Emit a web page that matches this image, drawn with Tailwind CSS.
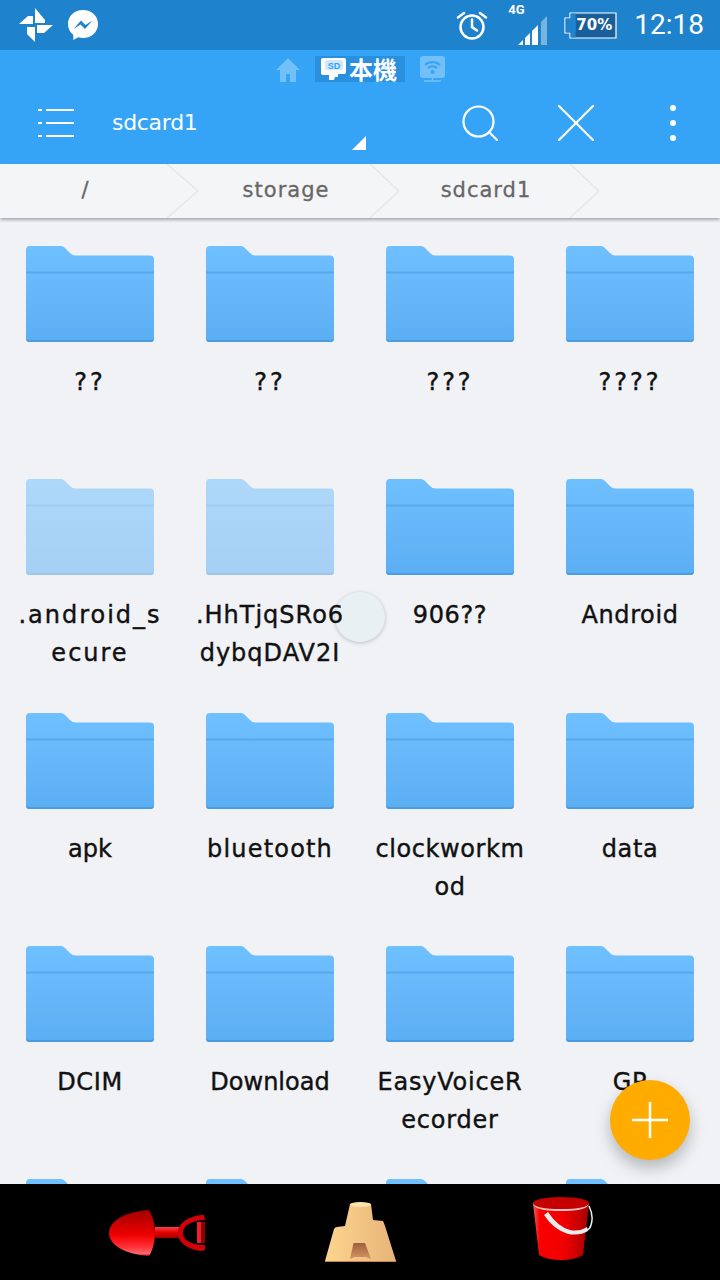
<!DOCTYPE html>
<html lang="zh-Hant">
<head>
  <meta charset="UTF-8">
  <title>sdcard1</title>
  <script src="https://cdn.jsdelivr.net/npm/@tailwindcss/browser@4"></script>
</head>
<body class="bg-black">
  <svg class="absolute w-0 h-0">
    <defs>
      <linearGradient id="folderFill" x1="0" y1="0" x2="0" y2="1">
        <stop offset="0" stop-color="#6fc0ff"/>
        <stop offset="1" stop-color="#5caef3"/>
      </linearGradient>
      <linearGradient id="red" x1="0" y1="0" x2="0" y2="1">
        <stop offset="0" stop-color="#a00000"/>
        <stop offset=".55" stop-color="#f00000"/>
        <stop offset=".8" stop-color="#ff3038"/>
        <stop offset=".95" stop-color="#ff6a70"/>
        <stop offset="1" stop-color="#a00000"/>
      </linearGradient>
      <linearGradient id="neck" x1="0" y1="0" x2="0" y2="1">
        <stop offset="0" stop-color="#ff4048"/>
        <stop offset=".5" stop-color="#e00000"/>
        <stop offset="1" stop-color="#a00000"/>
      </linearGradient>
      <linearGradient id="bucket" x1="0" y1="0" x2="1" y2="0">
        <stop offset="0" stop-color="#f06060"/>
        <stop offset=".12" stop-color="#fa0000"/>
        <stop offset=".55" stop-color="#f00000"/>
        <stop offset="1" stop-color="#a80000"/>
      </linearGradient>
      <linearGradient id="sand" x1="0" y1="0" x2="1" y2="0">
        <stop offset="0" stop-color="#fdd58e"/>
        <stop offset="1" stop-color="#e6b478"/>
      </linearGradient>
      <linearGradient id="door" x1="0" y1="0" x2="0" y2="1">
        <stop offset="0" stop-color="#9c6038"/>
        <stop offset="1" stop-color="#d79468"/>
      </linearGradient>
      <symbol id="folder" viewBox="0 0 128 96">
        <path d="M0 4a4 4 0 0 1 4-4h31q2 0 4 2l5 5q2 2.500 6 2.500h74a4 4 0 0 1 4 4V92a4 4 0 0 1-4 4H4a4 4 0 0 1-4-4Z" fill="url(#folderFill)"/>
        <rect y="25.500" width="128" height="2" fill="#58a9ec"/>
        <path d="M0 92v.500A3.500 3.500 0 0 0 3.500 96h121a3.500 3.500 0 0 0 3.500-3.500V92a3 3 0 0 1-3 2H3a3 3 0 0 1-3-2Z" fill="#4b9be0"/>
      </symbol>
    </defs>
  </svg>

  <div class="relative w-[720px] h-[1280px] overflow-hidden flex flex-col font-['DejaVu_Sans',sans-serif]">
    <!-- status bar -->
    <div class="h-[50px] shrink-0 bg-[#1f82cc] flex items-center pl-[19px] pr-[16px] text-white">
      <svg class="w-[34px] h-[34px]" viewBox="0 0 34 34" fill="#fff">
        <path d="M16 0l10 12v3H16Z"/>
        <path d="M0 16l9-8h5v8Z"/>
        <path d="M18 17h16l-9 8h-7Z"/>
        <path d="M8 19h8v15l-8-8Z"/>
      </svg>
      <svg class="w-[32px] h-[32px] ml-[14px]" viewBox="0 0 32 32">
        <path d="M16 1C7.500 1 1 7 1 15c0 4.500 2 8.300 5.300 10.800V31l5-2.800c1.500.5 3 .7 4.700.7 8.500 0 15-6 15-14S24.500 1 16 1Z" fill="#fff"/>
        <path d="M6.500 20l7.500-8.500 4.500 4.500 7-4.500-7.500 8.500-4.500-4.500Z" fill="#1f82cc"/>
      </svg>
      <div class="flex-1"></div>
      <svg class="w-[32px] h-[30px]" viewBox="0 0 32 30" fill="none" stroke="#fff" stroke-width="2.500">
        <circle cx="16" cy="17" r="11.500"/>
        <path d="M16 9.500V17l5 3.500M2 7.500 8 3M30 7.500 24 3" stroke-linecap="round"/>
      </svg>
      <div class="relative w-[30px] h-[42px] ml-[30px] mr-[16px]">
        <span class="absolute left-[-10px] top-[-2px] text-[13px] leading-[15px] font-bold font-['Roboto',sans-serif]">4G</span>
        <svg class="absolute left-0 top-[11px] w-[30px] h-[30px]" viewBox="0 0 30 30" fill="#fff">
          <path d="M0 30 5 25v5Z"/>
          <path d="M7 23l5-5v12H7Z"/>
          <path d="M14 16l6-6v20h-6Z"/>
          <path d="M23 7l6-6v29h-6Z" fill-opacity=".4"/>
        </svg>
      </div>
      <div class="relative w-[53px] h-[27px] flex items-center justify-center">
        <svg class="absolute inset-0 w-[53px] h-[27px]" viewBox="0 0 53 27">
          <path d="M6 1h46v25H6v-5H1V6h5Z" fill="#1a5f9a" stroke="#fff" stroke-width="1.200"/>
          <rect x="1.600" y="6.600" width="10" height="13.800" fill="#1f82cc"/>
          <rect x="6.600" y="1.600" width="5" height="23.800" fill="#1f82cc"/>
        </svg>
        <span class="relative ml-[7px] text-[15px] leading-none font-bold">70%</span>
      </div>
      <span class="ml-[17px] text-[28px] leading-none font-['Roboto',sans-serif]">12:18</span>
    </div>

    <!-- action bar -->
    <div class="h-[114px] shrink-0 bg-[#36a4f6] flex flex-col text-white">
      <div class="h-[38px] flex items-start justify-center pt-[6px] pl-[1px]">
        <svg class="w-[24px] h-[26px] mt-[1px] opacity-30" viewBox="0 0 24 26" fill="#fff">
          <path d="M12 1 0 13h4v12h6v-8h4v8h6V13h4Z"/>
        </svg>
        <div class="ml-[15px] w-[90px] h-[26px] bg-[#2a8fdd] flex items-center pl-[6px] gap-[3px]">
          <svg class="w-[25px] h-[22px]" viewBox="0 0 25 22">
            <path d="M2 0h21a2 2 0 0 1 2 2v12a2 2 0 0 1-2 2h-6v3h-3l-1 3H8v-5H2a2 2 0 0 1-2-2V2a2 2 0 0 1 2-2Z" fill="#fff"/>
            <rect x="4" y="2" width="18" height="10" rx="2" fill="#cfe8fc"/>
            <text x="13" y="10.500" text-anchor="middle" font-size="9" font-weight="bold" font-family="Liberation Sans" fill="#36a4f6">SD</text>
          </svg>
          <span class="text-[24px] leading-[26px] font-bold font-['Noto_Sans_CJK_TC',sans-serif]">本機</span>
        </div>
        <svg class="ml-[15px] w-[25px] h-[26px] opacity-30" viewBox="0 0 25 26">
          <path d="M3 0h19a3 3 0 0 1 3 3v16a3 3 0 0 1-3 3H3a3 3 0 0 1-3-3V3a3 3 0 0 1 3-3Z" fill="#fff"/>
          <path d="M5 9a11 11 0 0 1 15 0M8 12a7 7 0 0 1 9 0" fill="none" stroke="#36a4f6" stroke-width="2"/>
          <circle cx="12.500" cy="16" r="2" fill="#36a4f6"/>
          <path d="M4 25h17M12.500 22v3" stroke="#fff" stroke-width="1.500"/>
        </svg>
      </div>
      <div class="relative flex-1 flex items-center pb-[6px]">
        <svg class="ml-[38px] w-[36px] h-[30px]" viewBox="0 0 36 30" fill="none" stroke="#fff" stroke-width="2.200">
          <path d="M0 2h4M8 2h28M0 15h4M8 15h28M0 28h4M8 28h28"/>
        </svg>
        <span class="ml-[38px] text-[22px] leading-none tracking-[-0.3px]">sdcard1</span>
        <svg class="absolute left-[352px] top-[48px] w-[14px] h-[14px]" viewBox="0 0 14 14" fill="#fff"><path d="M14 0v14H0Z"/></svg>
        <div class="flex-1"></div>
        <svg class="w-[36px] h-[36px] mr-[60px]" viewBox="0 0 36 36" fill="none" stroke="#fff" stroke-width="2.200">
          <circle cx="16.500" cy="16.500" r="15"/>
          <path d="M27 27l8 8" stroke-linecap="round"/>
        </svg>
        <svg class="w-[36px] h-[36px] mr-[76px]" viewBox="0 0 36 36" fill="none" stroke="#fff" stroke-width="2.200">
          <path d="M1 1l34 34M35 1 1 35" stroke-linecap="round"/>
        </svg>
        <svg class="w-[6px] h-[36px] mr-[44px]" viewBox="0 0 6 36" fill="#fff">
          <circle cx="3" cy="3" r="3"/><circle cx="3" cy="18" r="3"/><circle cx="3" cy="33" r="3"/>
        </svg>
      </div>
    </div>

    <!-- breadcrumb -->
    <div class="relative z-10 h-[54px] shrink-0 bg-[#f4f5f7] flex shadow-[0_2px_3px_rgba(0,0,0,0.3)] text-[#666] text-[21px] tracking-[1px] [-webkit-text-stroke:0.3px_#666]">
      <div class="relative w-[170px] flex items-center justify-center pl-[1px]">
        /
        <svg class="absolute left-[167px] top-0 w-[32px] h-[54px]" viewBox="0 0 32 54" fill="none" stroke="#e6e7e9" stroke-width="1.500"><path d="M0 0l31 27L0 54"/></svg>
      </div>
      <div class="relative w-[202px] flex items-center justify-center pl-[30px]">
        storage
        <svg class="absolute left-[200px] top-0 w-[30px] h-[54px]" viewBox="0 0 30 54" fill="none" stroke="#e6e7e9" stroke-width="1.500"><path d="M0 0l29 27L0 54"/></svg>
      </div>
      <div class="relative w-[198px] flex items-center justify-center pl-[30px]">
        sdcard1
        <svg class="absolute left-[198px] top-0 w-[30px] h-[54px]" viewBox="0 0 30 54" fill="none" stroke="#e6e7e9" stroke-width="1.500"><path d="M0 0l29 27L0 54"/></svg>
      </div>
    </div>

    <!-- folders -->
    <div class="h-[966px] shrink-0 overflow-hidden bg-[#f0f2f5] pt-[28px] grid grid-cols-[repeat(4,180px)] auto-rows-[233.33px] text-center text-[#111] text-[24px] leading-[38px] tracking-[0.6px] [-webkit-text-stroke:0.4px_#111]">
      <div class="flex flex-col items-center"><svg class="w-[128px] h-[96px] mb-[21px]"><use href="#folder"/></svg><p class="tracking-[3px]">??</p></div>
      <div class="flex flex-col items-center"><svg class="w-[128px] h-[96px] mb-[21px]"><use href="#folder"/></svg><p class="tracking-[3px]">??</p></div>
      <div class="flex flex-col items-center"><svg class="w-[128px] h-[96px] mb-[21px]"><use href="#folder"/></svg><p class="tracking-[3px]">???</p></div>
      <div class="flex flex-col items-center"><svg class="w-[128px] h-[96px] mb-[21px]"><use href="#folder"/></svg><p class="tracking-[3px]">????</p></div>

      <div class="flex flex-col items-center"><svg class="w-[128px] h-[96px] mb-[21px] opacity-50"><use href="#folder"/></svg><p class="tracking-[2px]">.android_s<br>ecure</p></div>
      <div class="flex flex-col items-center"><svg class="w-[128px] h-[96px] mb-[21px] opacity-50"><use href="#folder"/></svg><p class="relative z-30 tracking-[1px]">.HhTjqSRo6<br>dybqDAV2I</p></div>
      <div class="flex flex-col items-center"><svg class="w-[128px] h-[96px] mb-[21px]"><use href="#folder"/></svg><p>906??</p></div>
      <div class="flex flex-col items-center"><svg class="w-[128px] h-[96px] mb-[21px]"><use href="#folder"/></svg><p>Android</p></div>

      <div class="flex flex-col items-center"><svg class="w-[128px] h-[96px] mb-[21px]"><use href="#folder"/></svg><p class="tracking-normal">apk</p></div>
      <div class="flex flex-col items-center"><svg class="w-[128px] h-[96px] mb-[21px]"><use href="#folder"/></svg><p class="tracking-[1.200px]">bluetooth</p></div>
      <div class="flex flex-col items-center"><svg class="w-[128px] h-[96px] mb-[21px]"><use href="#folder"/></svg><p>clockworkm<br>od</p></div>
      <div class="flex flex-col items-center"><svg class="w-[128px] h-[96px] mb-[21px]"><use href="#folder"/></svg><p>data</p></div>

      <div class="flex flex-col items-center"><svg class="w-[128px] h-[96px] mb-[21px]"><use href="#folder"/></svg><p>DCIM</p></div>
      <div class="flex flex-col items-center"><svg class="w-[128px] h-[96px] mb-[21px]"><use href="#folder"/></svg><p class="tracking-normal">Download</p></div>
      <div class="flex flex-col items-center"><svg class="w-[128px] h-[96px] mb-[21px]"><use href="#folder"/></svg><p class="tracking-[0.8px]">EasyVoiceR<br>ecorder</p></div>
      <div class="flex flex-col items-center"><svg class="w-[128px] h-[96px] mb-[21px]"><use href="#folder"/></svg><p>GP</p></div>

      <div class="flex flex-col items-center"><svg class="w-[128px] h-[96px]"><use href="#folder"/></svg></div>
      <div class="flex flex-col items-center"><svg class="w-[128px] h-[96px]"><use href="#folder"/></svg></div>
      <div class="flex flex-col items-center"><svg class="w-[128px] h-[96px]"><use href="#folder"/></svg></div>
      <div class="flex flex-col items-center"><svg class="w-[128px] h-[96px]"><use href="#folder"/></svg></div>
    </div>

    <!-- dock -->
    <div class="flex-1 bg-black relative z-10 flex items-start">
      <svg class="ml-[108px] mt-[26px] w-[98px] h-[46px]" viewBox="0 0 98 46">
        <path d="M41 0C20 1 1 10 1 23c0 13 19 22 40 23 4-6 6-16 6-23S45 6 41 0Z" fill="url(#red)"/>
        <rect x="47" y="17" width="24" height="11" fill="url(#neck)"/>
        <path d="M94 5C82 6 70 12 70 23s12 17 24 18l3-1v-5c-10 0-22-3-22-12s12-13 22-13l-1-5Z" fill="#d00008"/>
        <rect x="89" y="12" width="4.500" height="21" fill="#f02028"/>
        <rect x="93.500" y="12" width="3.500" height="21" fill="#8a0004"/>
      </svg>
      <svg class="ml-[119px] mt-[18px] w-[72px] h-[60px]" viewBox="0 0 72 60">
        <path d="M25 2q10-3 21 0l2 16 10 1q1 2 2 5l11 35H0l9-32q1-2 3-2l8-1Z" fill="url(#sand)"/>
        <ellipse cx="35.500" cy="2.500" rx="10.500" ry="2.500" fill="#fde3ae"/>
        <path d="M28.500 41H40l6 16-5-2H30l-5 2Z" fill="url(#door)"/>
        <path d="M0 59h71v1H0Z" fill="#c08850"/>
      </svg>
      <svg class="ml-[136px] mt-[13px] w-[60px] h-[64px]" viewBox="0 0 60 64">
        <path d="M0 6l6 52q8 5 22 5t22-5l6-52Z" fill="url(#bucket)"/>
        <ellipse cx="28" cy="6" rx="28" ry="6" fill="#c40000"/>
        <path d="M0 6q1 6 28 6t28-6q0 8-28 8T0 6Z" fill="#f0c4c4"/>
        <path d="M56 9q5 10 2 19-1 4-4 5" fill="none" stroke="#ececec" stroke-width="1.500"/>
        <path d="M11 18l4-3q10 15 22 18 9 2 17-3l1 4q-8 5-20 3-14-4-24-19Z" fill="#ececec"/>
      </svg>
    </div>

    <!-- selection ripple -->
    <div class="absolute left-[335px] top-[592px] z-20 w-[50px] h-[50px] rounded-full bg-[#e9f0f3] shadow-[0_1px_4px_rgba(0,0,0,0.22)]"></div>

    <!-- add button -->
    <button class="absolute left-[610px] top-[1080px] z-20 w-[80px] h-[80px] rounded-full bg-[#ffab00] shadow-[0_8px_16px_rgba(0,0,0,0.25)] flex items-center justify-center">
      <svg class="w-[36px] h-[36px]" viewBox="0 0 36 36" stroke="#fff" stroke-width="2.500"><path d="M0 18h36M18 0v36"/></svg>
    </button>
  </div>
</body>
</html>
